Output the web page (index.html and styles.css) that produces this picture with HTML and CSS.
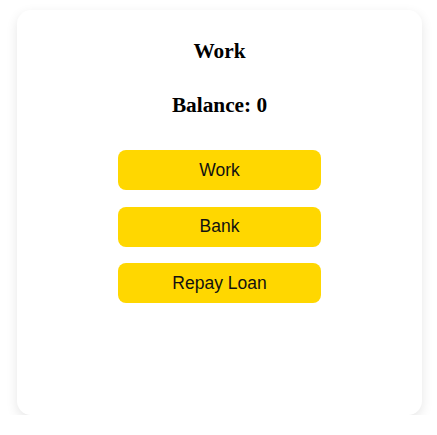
FILE: index.html
```html
<!DOCTYPE html>
<html>
<head>
<meta charset="utf-8">
<link rel="stylesheet" href="styles.css">
</head>
<body>
<div class="card">
  <h2 class="title">Work</h2>
  <h2 class="balance">Balance: 0</h2>
  <div class="actions">
    <button class="btn">Work</button>
    <button class="btn">Bank</button>
    <button class="btn">Repay Loan</button>
  </div>
</div>
</body>
</html>
```
FILE: styles.css
```css
html, body {
  margin: 0;
  padding: 0;
  background: #ffffff;
}
body {
  padding-top: 10px;
  padding-left: 17px;
}
.card {
  box-sizing: border-box;
  width: 405px;
  height: 405px;
  background: #ffffff;
  border-radius: 14px;
  box-shadow: 0 4px 12px rgba(0, 0, 0, 0.1);
  padding-top: 29px;
  display: flex;
  flex-direction: column;
  align-items: center;
}
.title, .balance {
  margin: 0;
  font-family: "Liberation Serif", "Times New Roman", serif;
  font-weight: bold;
  font-size: 21.3px;
  line-height: 24px;
  color: #000;
}
.balance {
  margin-top: 30px;
}
.actions {
  margin-top: 33px;
  display: flex;
  flex-direction: column;
  gap: 16.5px;
}
.btn {
  width: 203px;
  height: 40px;
  border: none;
  border-radius: 8px;
  background: #ffd700;
  color: #111;
  font-family: "Liberation Sans", Arial, sans-serif;
  font-size: 17.5px;
  padding: 0;
  cursor: pointer;
}
```
